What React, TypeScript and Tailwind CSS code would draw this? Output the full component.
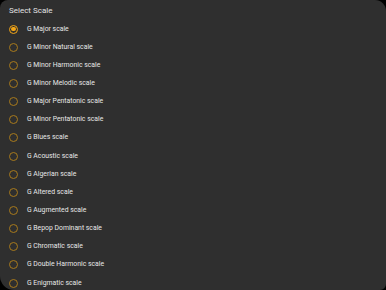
import React from "react";

const scales = [
  "G Major scale",
  "G Minor Natural scale",
  "G Minor Harmonic scale",
  "G Minor Melodic scale",
  "G Major Pentatonic scale",
  "G Minor Pentatonic scale",
  "G Blues scale",
  "G Acoustic scale",
  "G Algerian scale",
  "G Altered scale",
  "G Augmented scale",
  "G Bepop Dominant scale",
  "G Chromatic scale",
  "G Double Harmonic scale",
  "G Enigmatic scale",
];

export default function App() {
  return (
    <div className="w-[386px] h-[290px] bg-black overflow-hidden" style={{ fontFamily: "Roboto, 'Liberation Sans', sans-serif" }}>
      <div className="w-full h-full bg-[#2f2f2f] rounded-tl-[8px] rounded-tr-[11px] rounded-bl-[14px] rounded-br-[6px] overflow-hidden">
        <div className="h-[20px] pl-[9px] pt-[4px] text-[8px] leading-[14px] text-[#e2e2e2]">Select Scale</div>
        {scales.map((s, i) => (
          <div key={s} className="h-[18.15px] flex items-center">
            <div className="w-[27px] flex justify-center">
              {i === 0 ? (
                <div className="w-[9px] h-[9px] rounded-full border-[1.5px] border-[#f2a516] flex items-center justify-center">
                  <div className="w-[4.5px] h-[4.5px] rounded-full bg-[#f2a516]" />
                </div>
              ) : (
                <div className="w-[9px] h-[9px] rounded-full border-[1.5px] border-[#a87a1c]" />
              )}
            </div>
            <span className="text-[6.85px] text-[#e8e8e8] leading-none">{s}</span>
          </div>
        ))}
      </div>
    </div>
  );
}
